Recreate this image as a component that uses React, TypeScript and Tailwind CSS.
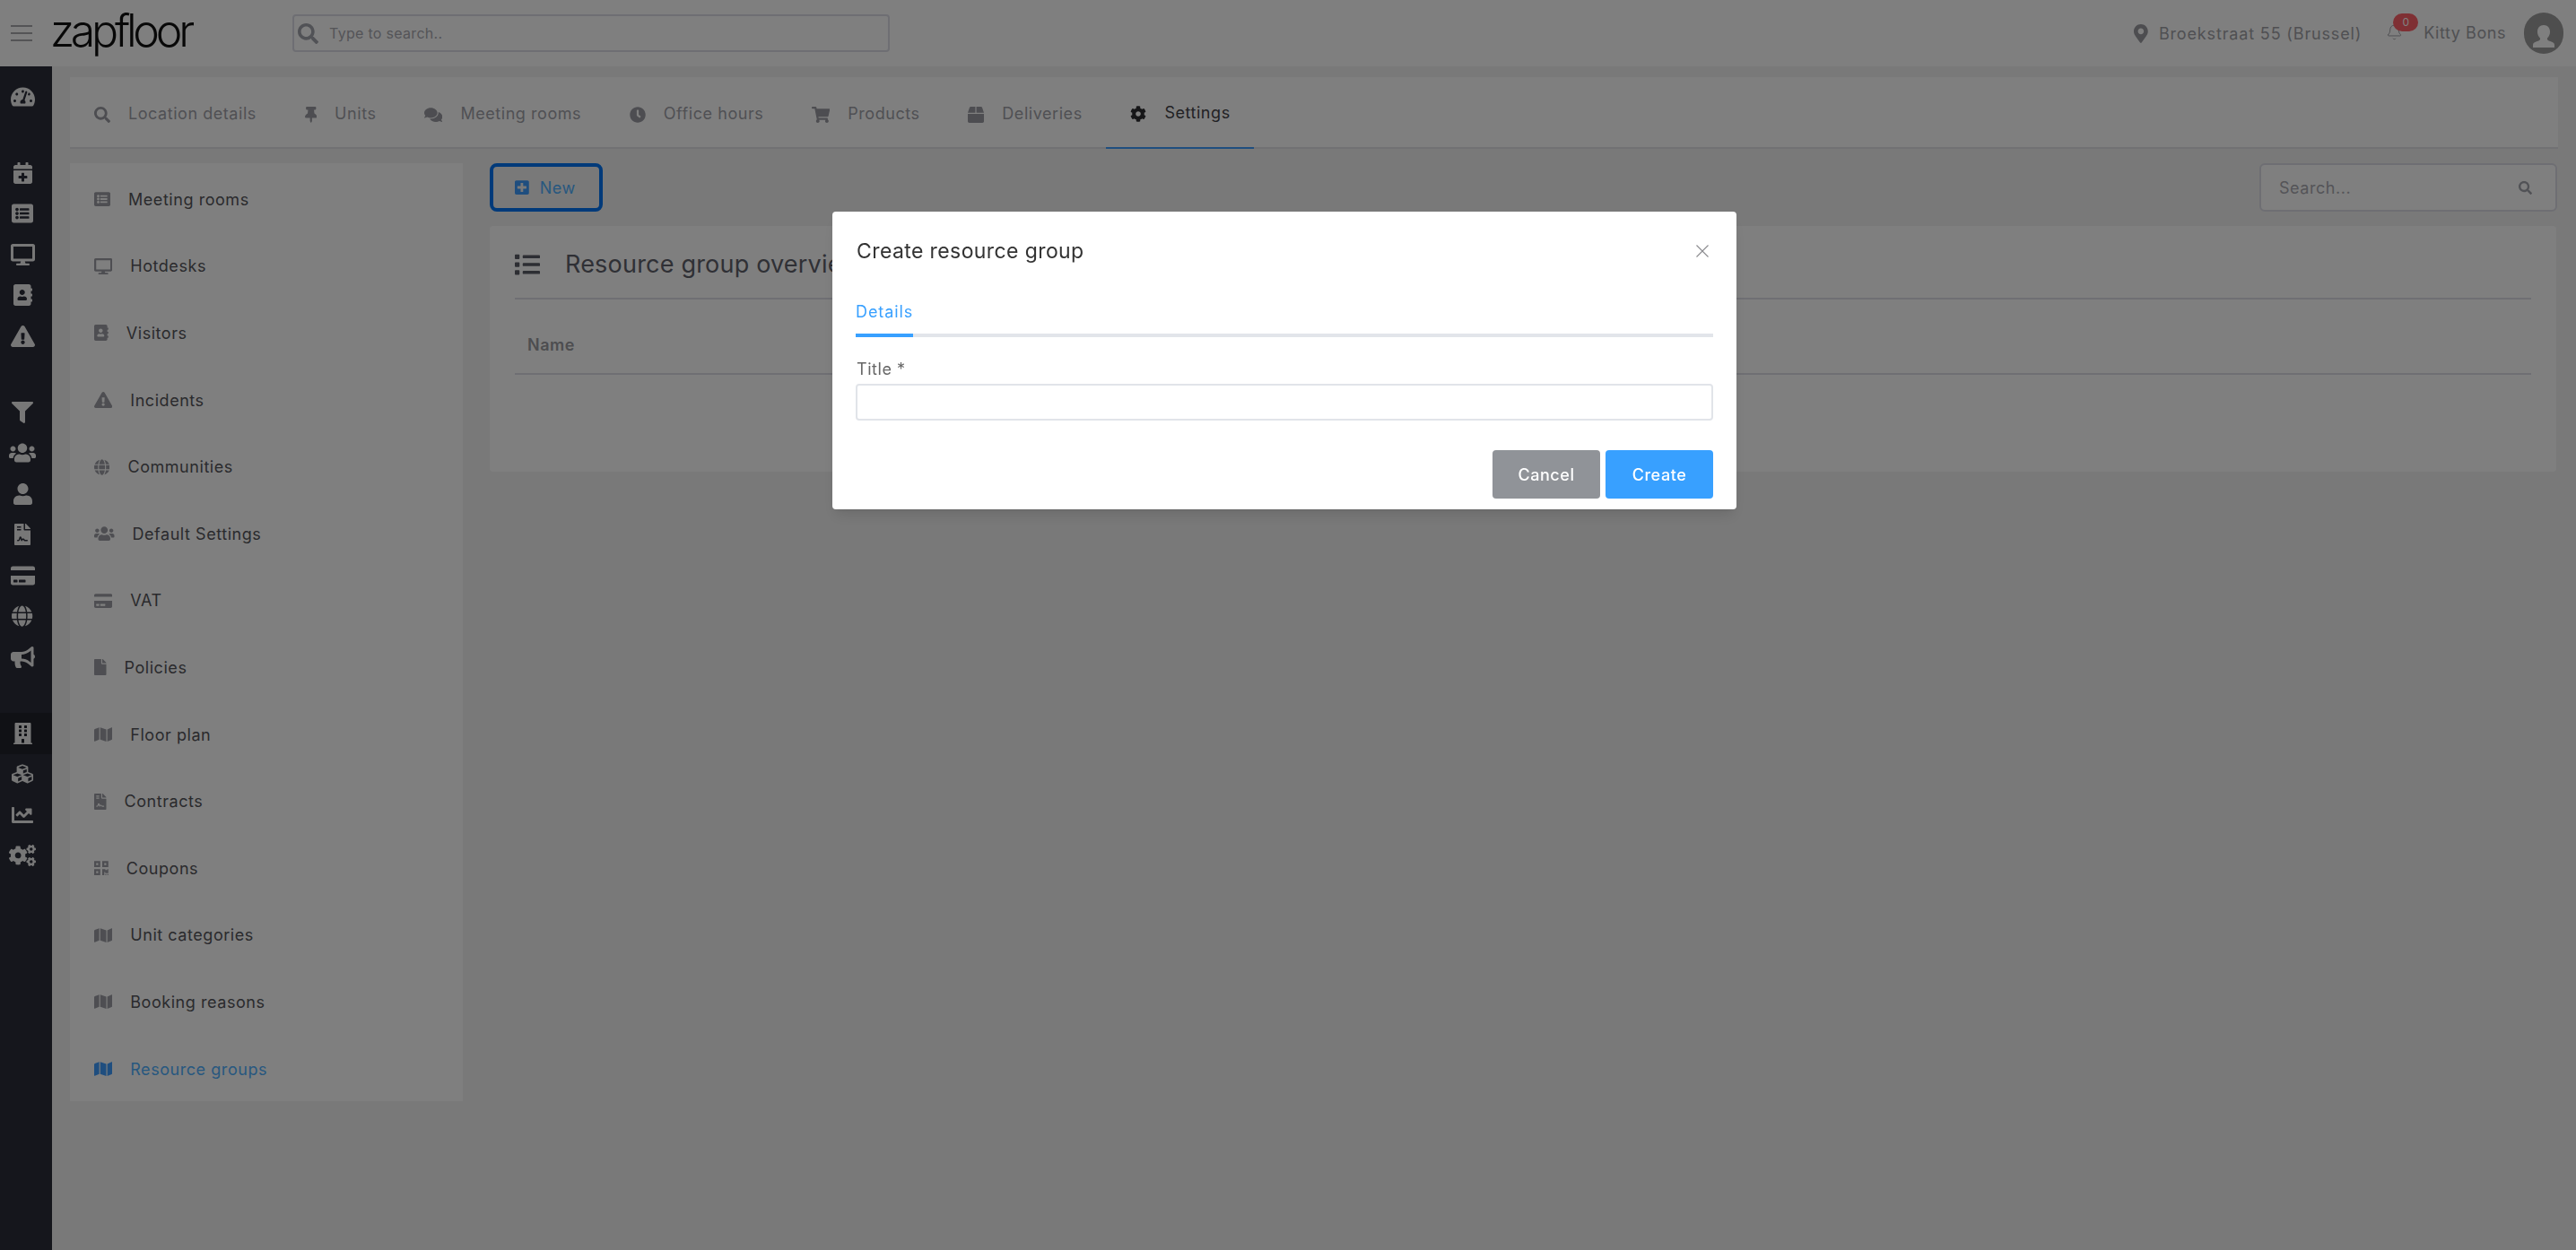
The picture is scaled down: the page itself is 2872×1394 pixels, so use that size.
import React from "react";
import {
  FaSearch, FaMapMarkerAlt, FaTachometerAlt, FaCalendarPlus, FaListAlt, FaDesktop, FaAddressBook,
  FaExclamationTriangle, FaFilter, FaUsers, FaUser, FaFileContract, FaCreditCard, FaGlobe, FaBullhorn, FaBuilding,
  FaCubes, FaChartLine, FaCogs, FaThumbtack, FaComments, FaClock, FaShoppingCart, FaBox, FaCog, FaFile, FaMap,
  FaQrcode, FaPlusSquare, FaList,
} from "react-icons/fa";
import { Bell } from "lucide-react";

const railGroups = [
  [{ Icon: FaTachometerAlt, w: "w-[27px]" }],
  [
    { Icon: FaCalendarPlus, w: "w-[21px]" },
    { Icon: FaListAlt, w: "w-[24px]" },
    { Icon: FaDesktop, w: "w-[27px]" },
    { Icon: FaAddressBook, w: "w-[21px]" },
    { Icon: FaExclamationTriangle, w: "w-[27px]" },
  ],
  [
    { Icon: FaFilter, w: "w-[24px]" },
    { Icon: FaUsers, w: "w-[30px]" },
    { Icon: FaUser, w: "w-[21px]" },
    { Icon: FaFileContract, w: "w-[18px]" },
    { Icon: FaCreditCard, w: "w-[27px]" },
    { Icon: FaGlobe, w: "w-[23.250px]" },
    { Icon: FaBullhorn, w: "w-[27px]" },
  ],
  [
    { Icon: FaBuilding, w: "w-[21px]" },
    { Icon: FaCubes, w: "w-[24px]" },
    { Icon: FaChartLine, w: "w-[24px]" },
    { Icon: FaCogs, w: "w-[30px]" },
  ],
];

const tabs = [
  { label: "Location details", Icon: FaSearch, w: "w-[18px]" },
  { label: "Units", Icon: FaThumbtack, w: "w-[13.500px]" },
  { label: "Meeting rooms", Icon: FaComments, w: "w-[20.250px]" },
  { label: "Office hours", Icon: FaClock, w: "w-[18px]" },
  { label: "Products", Icon: FaShoppingCart, w: "w-[20.250px]" },
  { label: "Deliveries", Icon: FaBox, w: "w-[18px]" },
  { label: "Settings", Icon: FaCog, w: "w-[18px]", active: true },
];

const menu = [
  { label: "Meeting rooms", Icon: FaListAlt, w: "w-[18px]" },
  { label: "Hotdesks", Icon: FaDesktop, w: "w-[20.250px]" },
  { label: "Visitors", Icon: FaAddressBook, w: "w-[15.750px]" },
  { label: "Incidents", Icon: FaExclamationTriangle, w: "w-[20.250px]" },
  { label: "Communities", Icon: FaGlobe, w: "w-[17.440px]" },
  { label: "Default Settings", Icon: FaUsers, w: "w-[22.500px]" },
  { label: "VAT", Icon: FaCreditCard, w: "w-[20.250px]" },
  { label: "Policies", Icon: FaFile, w: "w-[13.500px]" },
  { label: "Floor plan", Icon: FaMap, w: "w-[20.250px]" },
  { label: "Contracts", Icon: FaFileContract, w: "w-[13.500px]" },
  { label: "Coupons", Icon: FaQrcode, w: "w-[15.750px]" },
  { label: "Unit categories", Icon: FaMap, w: "w-[20.250px]" },
  { label: "Booking reasons", Icon: FaMap, w: "w-[20.250px]" },
  { label: "Resource groups", Icon: FaMap, w: "w-[20.250px]", active: true },
];

function Header() {
  return (
    <header className="h-[74px] bg-white flex items-center shrink-0">
      <svg viewBox="0 0 24 18" className="ml-[12px] w-[24px] h-[18px]" fill="#a8a8ac">
        <rect x="0" y="0" width="24" height="2" />
        <rect x="0" y="8" width="24" height="2" />
        <rect x="0" y="16" width="24" height="2" />
      </svg>
      <span className="ml-[20px] w-[158px] text-[50px] font-light tracking-[-0.085em] leading-none text-[#111] -mt-[6px]">zapfloor</span>
      <div className="ml-[112px] w-[666px] h-[42px] border-2 border-[#dcdde6] rounded-[4px] flex items-center pl-[4px]">
        <FaSearch className="w-[23px] h-[23px] text-[#a2a4ac]" />
        <input className="ml-[12px] flex-1 text-[16px] tracking-[0.3px] outline-none placeholder:text-[#a8a9b0]" placeholder="Type to search.." />
      </div>
      <div className="ml-auto flex items-center">
        <FaMapMarkerAlt className="h-[21px] w-[15.750px] text-[#9a9ba0]" />
        <span className="ml-[12px] text-[18px] tracking-[0.85px] text-[#a0a1a6]">Broekstraat 55 (Brussel)</span>
        <div className="relative ml-[27px] w-[18px] h-[20px] -mt-[2px]">
          <Bell strokeWidth={1.2} className="w-[19px] h-[20px] text-[#9a9ba0]" />
          <span className="absolute left-[8px] -top-[11px] w-[28px] h-[20px] rounded-full bg-[#ff6068] text-white text-[12px] leading-[20px] text-center">0</span>
        </div>
        <span className="ml-[24px] text-[18px] tracking-[0.55px] text-[#a0a1a6] -mt-[2px]">Kitty Bons</span>
        <div className="ml-[20px] mr-[14px] w-[44px] h-[46px] rounded-full bg-[#9c9c9c] overflow-hidden">
          <svg viewBox="0 0 44 46" className="w-full h-full" fill="#fff">
            <path d="M22 14c-4.400 0-7 3.200-7 7.400 0 3 1.300 5.500 3 7 .6 2-1 3-3.200 3.600-2.600.8-4.800 1.800-4.800 4V39h24v-3c0-2.200-2.200-3.200-4.800-4-2.200-.6-3.800-1.600-3.200-3.600 1.700-1.500 3-4 3-7 0-4.200-2.600-7.400-7-7.400z" />
          </svg>
        </div>
      </div>
    </header>
  );
}

function Rail() {
  return (
    <aside className="w-[58px] shrink-0 bg-[#2a2d38] pt-[11px] flex flex-col">
      {railGroups.map((group, g) => (
        <div key={g} className="mb-[39.500px]">
          {group.map(({ Icon, w }, i) => (
            <div key={i} className={`h-[45.500px] pr-[8px] flex items-center justify-center ${Icon === FaBuilding ? "bg-[#20222b]" : ""}`}>
              <Icon className={`h-[24px] ${w} text-[#eeeeee]`} />
            </div>
          ))}
        </div>
      ))}
    </aside>
  );
}

function Tabs() {
  return (
    <nav className="h-[80px] bg-white border-b-2 border-[#e2e2e6] flex shrink-0">
      {tabs.map(({ label, Icon, w, active }) => (
        <div key={label} className={`pl-[27px] pr-[26.700px] h-[80px] flex items-center ${active ? "border-b-[2px] border-[#3f9dff] text-[#444448]" : "text-[#a0a1a8]"}`}>
          <Icon className={`h-[18px] ${w} mr-[20px] mt-[3px] ${active ? "text-[#2c2c30]" : "text-[#9a9ba2]"}`} />
          <span className="text-[18px] tracking-[0.55px] mt-[1px]">{label}</span>
        </div>
      ))}
    </nav>
  );
}

function Menu() {
  return (
    <div className="w-[438px] h-[1046px] bg-white pt-[3px] shrink-0">
      {menu.map(({ label, Icon, w, active }) => (
        <div key={label} className={`h-[74.600px] pl-[27px] flex items-center ${active ? "text-[#4fb0ff]" : "text-[#55555a]"}`}>
          <Icon className={`h-[18px] ${w} mr-[20px] ${active ? "text-[#3f9dff]" : "text-[#9c9da4]"}`} />
          <span className="text-[18px] tracking-[0.55px]">{label}</span>
        </div>
      ))}
    </div>
  );
}

function Overview() {
  return (
    <div className="flex-1 min-w-0">
      <div className="h-[54px] mb-[16px] flex justify-between">
        <button className="w-[126px] h-[54px] border-[4px] border-[#0074f5] rounded-[8px] flex items-center pl-[24px] text-[#4fb0ff]">
          <FaPlusSquare className="h-[18px] w-[15.750px] text-[#3f9dff]" />
          <span className="ml-[12px] text-[18px] tracking-[0.55px]">New</span>
        </button>
        <div className="w-[332px] h-[54px] mr-[1px] border-2 border-[#dcdde6] rounded-[6px] bg-white flex items-center pl-[20px] pr-[26px]">
          <input className="flex-1 min-w-0 text-[18px] tracking-[0.55px] outline-none placeholder:text-[#a8a9b0]" placeholder="Search..." />
          <FaSearch className="h-[15px] w-[15px] text-[#a2a4ac]" />
        </div>
      </div>
      <div className="mr-[2px] h-[274px] bg-white rounded-[4px] px-[28px]">
        <div className="h-[82px] pt-[6px] border-b-2 border-[#dedfe6] flex items-center">
          <FaList className="h-[28px] w-[28px] text-[#5a5c66]" />
          <h1 className="ml-[28px] text-[27px] tracking-[0.2px] text-[#5f616b]">Resource group overview</h1>
        </div>
        <div className="h-[84px] pt-[18px] border-b-2 border-[#dedfe6] flex items-center pl-[14px]">
          <span className="text-[18px] font-semibold tracking-[0.5px] text-[#9a9ba0]">Name</span>
        </div>
      </div>
    </div>
  );
}

function Modal() {
  return (
    <div className="fixed inset-0 bg-black/50 flex justify-center pt-[236px] pr-[8px]">
      <div className="w-[1008px] h-[332px] bg-white rounded-[4px] shadow-lg px-[26px] flex flex-col">
        <div className="h-[88px] flex items-center justify-between pl-[1px] pr-[4px]">
          <h2 className="text-[23px] tracking-[0.4px] text-[#333]">Create resource group</h2>
          <svg viewBox="0 0 16 16" className="w-[16px] h-[16px]" stroke="#8a8a8e" strokeWidth="1.100" fill="none"><path d="M1.500 1.500l13 13M14.500 1.500l-13 13" /></svg>
        </div>
        <div className="h-[52px] border-b-[4px] border-[#e2e5ea]">
          <div className="w-[64px] h-[52px] border-b-[4px] border-[#38a0ff] text-[#38a0ff] text-[18px] tracking-[0.9px] pt-[10px]">Details</div>
        </div>
        <label className="mt-[26px] pl-[1px] text-[18px] tracking-[0.55px] leading-[20px] text-[#666]">Title *</label>
        <input className="mt-[6px] h-[41px] border-2 border-[#e1e4e9] rounded-[4px] outline-none" />
        <div className="mt-[33px] flex justify-end gap-[6px]">
          <button className="w-[120px] h-[54px] rounded-[4px] bg-[#909398] text-white text-[18px] font-medium tracking-[0.55px]">Cancel</button>
          <button className="w-[120px] h-[54px] rounded-[4px] bg-[#38a0ff] text-white text-[18px] font-medium tracking-[0.55px]">Create</button>
        </div>
      </div>
    </div>
  );
}

export default function App() {
  return (
    <div className="h-[1394px] overflow-hidden flex flex-col bg-[#f2f2f2] font-['Inter',sans-serif]">
      <Header />
      <div className="flex-1 flex min-h-0">
        <Rail />
        <main className="flex-1 min-w-0 pt-[12px] px-[20px]">
          <Tabs />
          <div className="flex gap-[30px] mt-[16px]">
            <Menu />
            <Overview />
          </div>
        </main>
      </div>
      <Modal />
    </div>
  );
}
